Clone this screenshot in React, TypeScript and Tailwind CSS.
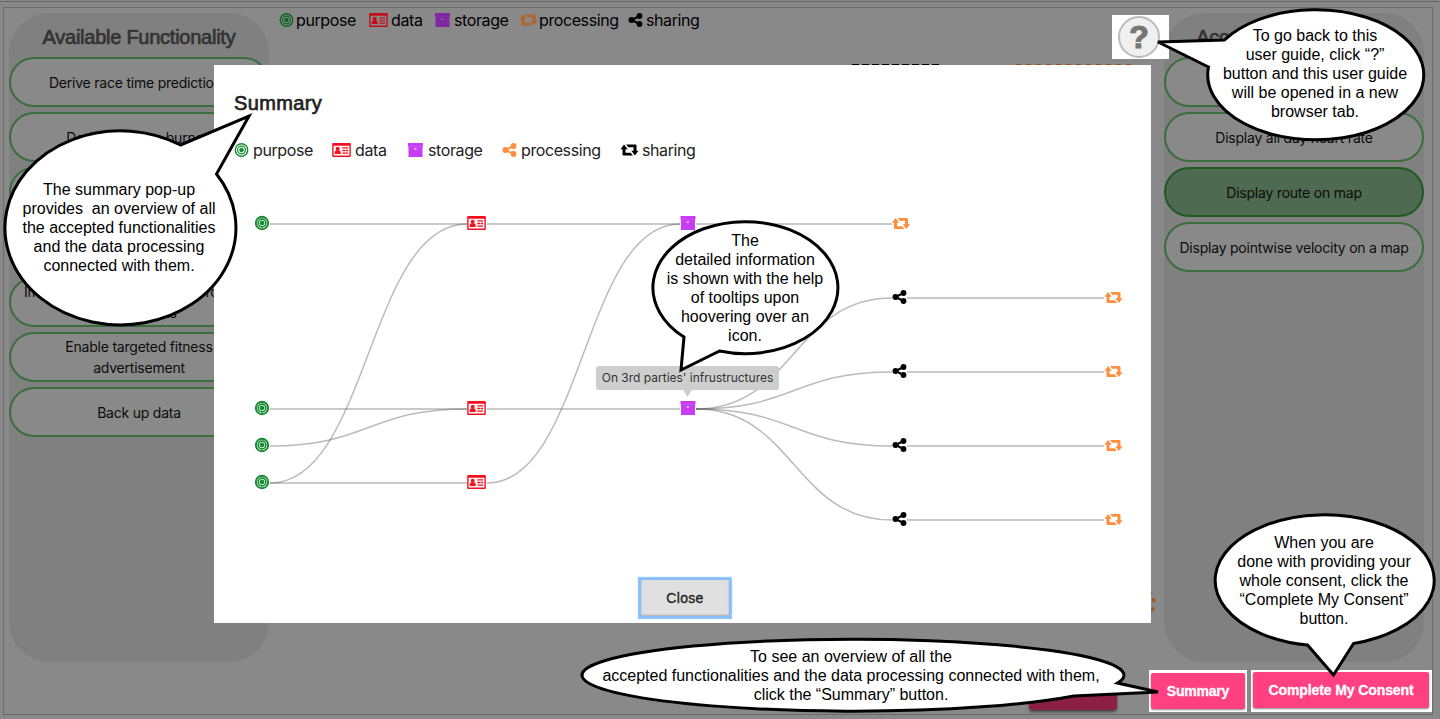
import React from "react";

const GREEN = "#148a30";
const RED = "#f5101f";
const PURPLE = "#c63df5";
const ORANGE = "#ff8f3f";

type Kind = "purpose" | "data" | "storage" | "processing" | "sharing";

function Glyph({ kind, color, bold }: { kind: Kind; color: string; bold?: boolean }) {
  if (kind === "purpose")
    return (
      <g fill="none" stroke={color}>
        <circle r="6.2" strokeWidth={bold ? 1.9 : 1.4} />
        <circle r="3.9" strokeWidth={bold ? 1.6 : 1.2} />
        <circle r="2" fill={color} strokeWidth={bold ? 1 : 0.6} />
      </g>
    );
  if (kind === "data")
    return (
      <g>
        <path
          fill={color}
          fillRule="evenodd"
          d="M-8.4-7H8.4Q9.3-7 9.3-6V6Q9.3 7 8.4 7H-8.4Q-9.3 7-9.3 6V-6Q-9.3-7-8.4-7ZM-7.9-4.2V5.6H7.9V-4.2Z"
        />
        <circle cx="-3.8" cy="-1.2" r="2" fill={color} />
        <path fill={color} d="M-6.8 4V2.2Q-6.5.3-4.8.3H-2.8Q-1.1.3-.8 2.2V4Z" />
        <path stroke={color} strokeWidth="1.3" d="M.8-2.2H6.6M.8.5H3.8M4.4.5H6.6M.8 3.1H6.6" />
      </g>
    );
  if (kind === "storage")
    return (
      <g fill={color}>
        <path d="M-7.5-7H7.5V-3.4H-7.5Z" />
        <path fillRule="evenodd" d="M-7-3H7V7H-7ZM-1.4-1.4V-.6H1V-1.4Z" />
        <path d="M-7-4H7V-2.6H-7Z" opacity=".75" />
      </g>
    );
  if (kind === "processing")
    return (
      <g fill={color}>
        <path d="M-9-.8-5.4-5.4-1.8-.8H-4V2.8H1.2L3.5 5.5H-5.8Q-7 5.5-7 4.4V-.8Z" />
        <path d="M9 .8 5.4 5.4 1.8.8H4V-2.8H-1.2L-3.5-5.5H5.8Q7-5.5 7-4.4V.8Z" />
      </g>
    );
  return (
    <g fill={color}>
      <circle cx="-4" cy="0" r="3" />
      <circle cx="4" cy="-4" r="2.9" />
      <circle cx="4" cy="4" r="2.9" />
      <path d="M4-4-4 0 4 4" fill="none" stroke={color} strokeWidth="2" />
    </g>
  );
}

function LegendItem({ kind, color, label, className, gap }: { kind: Kind; color: string; label: string; className: string; gap: string }) {
  const half = kind === "data" || kind === "processing" ? 9.5 : 7.5;
  return (
    <div className={`flex shrink-0 items-center ${className} ${gap}`}>
      <svg width={half * 2} height="16" viewBox={`${-half} -8 ${half * 2} 16`} className="shrink-0">
        <Glyph kind={kind} color={color} />
      </svg>
      <span className="tracking-[-0.4px]">{label}</span>
    </div>
  );
}

function Pill({ lines, active }: { lines: string[]; active?: boolean }) {
  return (
    <div
      className={`flex h-[50px] w-[260px] shrink-0 flex-col items-center justify-center rounded-full border-2 text-[14px] leading-[21px] tracking-[-0.22px] whitespace-nowrap text-[#0c0c0c] ${
        active ? "border-[#1f5a23] bg-[#4e6a51]" : "border-[#3a6e3d] bg-[#898989]"
      }`}
    >
      {lines.map((l) => (
        <span key={l}>{l}</span>
      ))}
    </div>
  );
}

function Panel({ title, items }: { title: string; items: { lines: string[]; active?: boolean }[] }) {
  return (
    <section className="flex h-[649px] w-[260px] shrink-0 flex-col gap-[5px] rounded-[40px] bg-[#808080]">
      <h2 className="flex h-[39px] items-center justify-center pt-2 font-['Liberation_Sans',sans-serif] text-[20px] tracking-[-0.25px] whitespace-nowrap text-[#333] [-webkit-text-stroke:0.7px_#333]">
        {title}
      </h2>
      {items.map((it, i) => (
        <Pill key={i} {...it} />
      ))}
    </section>
  );
}

const nodes: [Kind, number, number, string][] = [
  ["purpose", 262, 223, GREEN],
  ["purpose", 262, 408, GREEN],
  ["purpose", 262, 445, GREEN],
  ["purpose", 262, 482, GREEN],
  ["data", 476.5, 223, RED],
  ["data", 476.5, 408, RED],
  ["data", 476.5, 482, RED],
  ["storage", 688, 223, PURPLE],
  ["storage", 688, 408, PURPLE],
  ["processing", 901, 223.5, ORANGE],
  ["sharing", 899.5, 297, "#000"],
  ["sharing", 899.5, 371, "#000"],
  ["sharing", 899.5, 445, "#000"],
  ["sharing", 899.5, 519, "#000"],
  ["processing", 1113.5, 297.5, ORANGE],
  ["processing", 1113.5, 371.5, ORANGE],
  ["processing", 1113.5, 445.5, ORANGE],
  ["processing", 1113.5, 519.5, ORANGE],
];

const links: [number, number, number, number][] = [
  [270, 224, 467, 224],
  [270, 409, 467, 409],
  [270, 446, 467, 409],
  [270, 483, 467, 224],
  [270, 483, 467, 483],
  [487, 224, 680, 224],
  [487, 409, 680, 409],
  [487, 483, 680, 224],
  [696, 224, 892, 224],
  [696, 409, 892, 298],
  [696, 409, 892, 372],
  [696, 409, 892, 446],
  [696, 409, 892, 520],
  [907, 298, 1104, 298],
  [907, 372, 1104, 372],
  [907, 446, 1104, 446],
  [907, 520, 1104, 520],
];

function Flow() {
  return (
    <svg width="937" height="380" viewBox="214 180 937 380" className="block">
      <g fill="none" stroke="#555">
        {links.map(([a, b, c, d], i) => (
          <path
            key={i}
            strokeWidth={b === d ? 2 : 1.5}
            strokeOpacity={b === d ? 0.31 : 0.4}
            d={`M${a} ${b}C${(a + c) / 2} ${b} ${(a + c) / 2} ${d} ${c} ${d}`}
          />
        ))}
      </g>
      {nodes.map(([k, x, y, c], i) => (
        <g key={i} transform={`translate(${x} ${y})`}>
          <Glyph kind={k} color={c} bold />
        </g>
      ))}
    </svg>
  );
}

function BubbleText({ className, lines }: { className: string; lines: string[] }) {
  return (
    <div className={`absolute text-center text-[16px] leading-[19px] whitespace-pre text-black ${className}`}>
      {lines.map((l) => (
        <div key={l}>{l}</div>
      ))}
    </div>
  );
}

export default function App() {
  return (
    <div className="relative h-[719px] w-[1440px] overflow-hidden bg-[#898989] pt-[7px] pl-[3px] font-['Inter',sans-serif]">
      <div className="absolute top-[1px] left-0 h-px w-full bg-[#666]" />
      <div className="flex h-[708px] w-[1430px] border border-[#6c6c6c] pt-[5px] pl-[5px]">
        <Panel
          title="Available Functionality"
          items={[
            { lines: ["Derive race time predictions"] },
            { lines: ["Derive calories burned"] },
            { lines: [] },
            { lines: [] },
            { lines: ["Improve fitness by sharing progress", "with friends"] },
            { lines: ["Enable targeted fitness", "advertisement"] },
            { lines: ["Back up data"] },
          ]}
        />
        <main className="w-[895px] shrink-0">
          <div className="flex h-[14px] items-center pl-[10px] text-[16px] text-black">
            <LegendItem kind="purpose" color="#0d6422" label="purpose" gap="gap-[2px]" className="w-[90px]" />
            <LegendItem kind="data" color="#c50d19" label="data" gap="gap-[3px]" className="w-[66px]" />
            <LegendItem kind="storage" color="#8127a3" label="storage" gap="gap-[4px]" className="w-[84px]" />
            <LegendItem kind="processing" color="#b0642c" label="processing" gap="gap-[1px]" className="w-[109px]" />
            <LegendItem kind="sharing" color="#000" label="sharing" gap="gap-[3px]" className="w-[80px]" />
          </div>
        </main>
        <Panel
          title="Accepted Functionality"
          items={[
            { lines: [] },
            { lines: ["Display all day heart rate"] },
            { lines: ["Display route on map"], active: true },
            { lines: ["Display pointwise velocity on a map"] },
          ]}
        />
      </div>

      <svg className="absolute inset-0" width="1440" height="719" fill="none">
        <path d="M852 65H940" stroke="#000" strokeWidth="2" strokeDasharray="7 3" />
        <path d="M1016 65H1134" stroke="#9a4d12" strokeWidth="2" strokeDasharray="5 5" />
        <path d="M1146 589Q1154 594 1154 603T1146 616" stroke="#a5561b" strokeWidth="3" strokeDasharray="4 5" strokeDashoffset="6" />
      </svg>

      <div className="absolute top-[672px] left-[1029px] h-[38px] w-[88px] rounded-sm bg-[#8b2044] shadow-[0_2px_3px_#444]" />

      <div role="dialog" className="absolute top-[65px] left-[214px] flex h-[558px] w-[937px] flex-col bg-white text-[#222]">
        <h1 className="h-[69px] pt-[25px] pl-[20px] font-['Liberation_Sans',sans-serif] text-[20px] leading-[26px] tracking-[0.35px] [-webkit-text-stroke:0.7px_#222]">
          Summary
        </h1>
        <div className="flex h-[32px] items-center pl-[20px] text-[16px]">
          <LegendItem kind="purpose" color={GREEN} label="purpose" gap="gap-[4px]" className="w-[98px]" />
          <LegendItem kind="data" color={RED} label="data" gap="gap-[4px]" className="w-[76px]" />
          <LegendItem kind="storage" color={PURPLE} label="storage" gap="gap-[5px]" className="w-[94px]" />
          <LegendItem kind="sharing" color={ORANGE} label="processing" gap="gap-[4px]" className="w-[118px]" />
          <LegendItem kind="processing" color="#000" label="sharing" gap="gap-[3px]" className="w-[80px]" />
        </div>
        <div className="mt-[14px]">
          <Flow />
        </div>
        <button className="absolute top-[515px] left-[427px] h-[36px] w-[88px] bg-[#e0e0e0] font-['Liberation_Sans',sans-serif] text-[14px] tracking-[0.3px] text-[#222] shadow-[0_0_0_2px_#86bdfa,0_0_1px_3px_#9cc9fb,inset_0_-1px_2px_#aaa] [-webkit-text-stroke:0.35px_#222]">
          Close
        </button>
        <div className="absolute top-[301px] left-[382px] flex h-[24px] w-[183px] items-center justify-center rounded-[3px] bg-[#cecece] text-[12px] whitespace-nowrap text-[#333]">
          On 3rd parties' infrustructures
          <svg className="absolute top-[24px] left-[87px]" width="10" height="8">
            <path d="M0 0H9L4.5 7Z" fill="#cecece" />
          </svg>
        </div>
      </div>

      <div className="absolute top-[15px] left-[1112px] flex h-[44px] w-[57px] bg-white pt-[1px] pl-[6px]">
        <div className="flex h-[42px] w-[42px] items-center justify-center rounded-full border-2 border-[#bbb] bg-[#f0f0f0] font-['Liberation_Sans',sans-serif] text-[32px] font-bold text-[#777] [-webkit-text-stroke:1.2px_#777]">
          ?
        </div>
      </div>

      <div className="absolute top-[670px] left-[1149px] flex h-[42px] w-[98px] bg-white pt-[3px] pl-[2px] font-['Liberation_Sans',sans-serif]">
        <div className="flex h-[36px] w-[94px] items-center justify-center rounded-[2px] bg-[#ff4081] text-[14px] font-bold tracking-[-0.2px] text-white shadow-[0_1px_2px_#888] [-webkit-text-stroke:0.3px_#fff]">
          Summary
        </div>
      </div>
      <div className="absolute top-[670px] left-[1251px] flex h-[42px] w-[181px] bg-white pt-[2px] pl-[2px] font-['Liberation_Sans',sans-serif]">
        <div className="flex h-[36px] w-[176px] items-center justify-center rounded-[2px] bg-[#ff4081] text-[14px] font-bold tracking-[-0.1px] whitespace-nowrap text-white shadow-[0_1px_2px_#888] [-webkit-text-stroke:0.3px_#fff]">
          Complete My Consent
        </div>
      </div>

      <svg className="absolute inset-0" width="1440" height="719" fill="#fff" stroke="#000" strokeWidth="3">
        <path d="M216.500 174A115.500 97 0 1 1 180.500 145L249 116Z" />
        <path d="M1208.500 67A108 65 0 1 0 1224.500 40L1158 42Z" />
        <path d="M684 337A92.500 66 0 1 1 719.500 351L681 370Z" />
        <path d="M1117.500 683A271 36 0 1 0 1074 696L1158 692Z" />
        <path d="M1307.500 645A109.500 65.500 0 1 1 1353.500 643.500L1333.500 675Z" />
      </svg>
      <div className="font-['Liberation_Sans',sans-serif]">
        <BubbleText
          className="top-[180px] left-[9px] w-[220px]"
          lines={["The summary pop-up", "provides  an overview of all", "the accepted functionalities", "and the data processing", "connected with them."]}
        />
        <BubbleText
          className="top-[26px] left-[1205px] w-[220px]"
          lines={["To go back to this", "user guide, click “?”", "button and this user guide", "will be opened in a new", "browser tab."]}
        />
        <BubbleText
          className="top-[231px] left-[645px] w-[200px]"
          lines={["The", "detailed information", "is shown with the help", "of tooltips upon", "hoovering over an", "icon."]}
        />
        <BubbleText
          className="top-[647px] left-[590px] w-[522px]"
          lines={["To see an overview of all the", "accepted functionalities and the data processing connected with them,", "click the “Summary” button."]}
        />
        <BubbleText
          className="top-[533px] left-[1214px] w-[220px]"
          lines={["When you are", "done with providing your", "whole consent, click the", "“Complete My Consent”", "button."]}
        />
      </div>
    </div>
  );
}
